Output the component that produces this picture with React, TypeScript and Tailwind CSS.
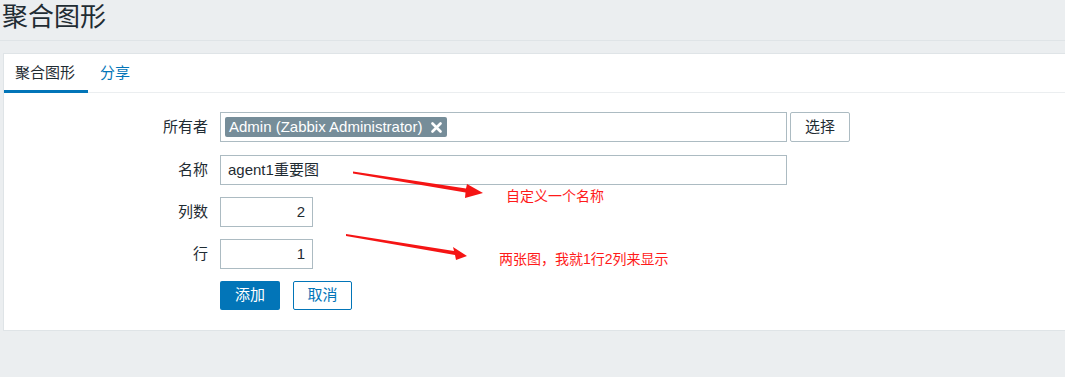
import React from "react";

function XIcon() {
  return (
    <svg width="11" height="11" viewBox="0 0 11 11" className="ml-[9px]">
      <path d="M1.5 1.5 L9.5 9.5 M9.5 1.5 L1.5 9.5" stroke="#ffffff" strokeWidth="2.6" strokeLinecap="round" />
    </svg>
  );
}

function Row({ label, children, className = "" }: { label: string; children: React.ReactNode; className?: string }) {
  return (
    <div className={"flex items-center h-[30px] " + className}>
      <div className="w-[204px] pr-0 text-right text-[15px] text-[#1f2c33]">{label}</div>
      <div className="ml-[12px] flex items-center">{children}</div>
    </div>
  );
}

export default function App() {
  return (
    <div className="relative w-[1065px] h-[377px] overflow-hidden bg-[#ebeef0] font-['Liberation_Sans','Noto_Sans_CJK_SC',sans-serif] text-[#1f2c33]">
      <div className="h-[41px] border-b border-[#dfe4e7] pl-[2px] flex items-center">
        <h1 className="text-[26px] leading-none font-normal mt-[-6px]">聚合图形</h1>
      </div>
      <div className="mt-[12px] ml-[3px] mr-[-20px] bg-white border border-[#dfe4e7]">
        <div className="flex h-[39px] border-b border-[#ebeef0]">
          <div className="w-[84px] pl-[11px] flex items-center text-[15px] text-[#1f2c33] border-b-[3px] border-[#0275b8] mb-[-1px] pt-[3px]">
            聚合图形
          </div>
          <div className="pl-[12px] flex items-center text-[15px] text-[#0275b8]">分享</div>
        </div>
        <div className="pt-[19px] pb-[20px]">
          <Row label="所有者">
            <div className="w-[567px] h-[30px] border border-[#acbbc2] bg-white flex items-center pl-[4px]">
              <div className="h-[20px] bg-[#768d99] rounded-[2px] flex items-center pl-[4px] pr-[5px] text-white text-[15px]">
                Admin (Zabbix Administrator)
                <XIcon />
              </div>
            </div>
            <button className="ml-[3px] w-[60px] h-[30px] border border-[#acbbc2] rounded-[2px] bg-white text-[15px] text-[#1f2c33]">
              选择
            </button>
          </Row>
          <Row label="名称" className="mt-[13px]">
            <div className="w-[567px] h-[30px] border border-[#acbbc2] bg-white flex items-center pl-[7px] text-[15px] text-[#1f2c33]">
              agent1重要图
            </div>
          </Row>
          <Row label="列数" className="mt-[12px]">
            <div className="w-[93px] h-[30px] border border-[#acbbc2] bg-white flex items-center justify-end pr-[7px] text-[15px] text-[#1f2c33]">
              2
            </div>
          </Row>
          <Row label="行" className="mt-[12px]">
            <div className="w-[93px] h-[30px] border border-[#acbbc2] bg-white flex items-center justify-end pr-[7px] text-[15px] text-[#1f2c33]">
              1
            </div>
          </Row>
          <Row label="" className="mt-[12px] !h-[29px]">
            <button className="w-[60px] h-[29px] rounded-[2px] bg-[#0275b8] text-white text-[15px]">添加</button>
            <button className="ml-[13px] w-[59px] h-[29px] rounded-[2px] border border-[#0275b8] bg-white text-[#0275b8] text-[15px]">
              取消
            </button>
          </Row>
        </div>
      </div>

      <svg className="absolute left-0 top-0 pointer-events-none" width="1065" height="377">
        <polygon points="353,171.5 466,188.5 467,184 483,193 465,198 465.5,192.5 353,173.5" fill="#f51414" />
        <polygon points="346,234 454,251 453,247 467,256 456,260 455,255 346,236" fill="#f51414" />
      </svg>
      <div className="absolute left-[506px] top-[187px] text-[14px] leading-[18px] text-[#ff1a1a]">自定义一个名称</div>
      <div className="absolute left-[499px] top-[250px] text-[14px] leading-[18px] text-[#ff1a1a]">两张图，我就1行2列来显示</div>
    </div>
  );
}
